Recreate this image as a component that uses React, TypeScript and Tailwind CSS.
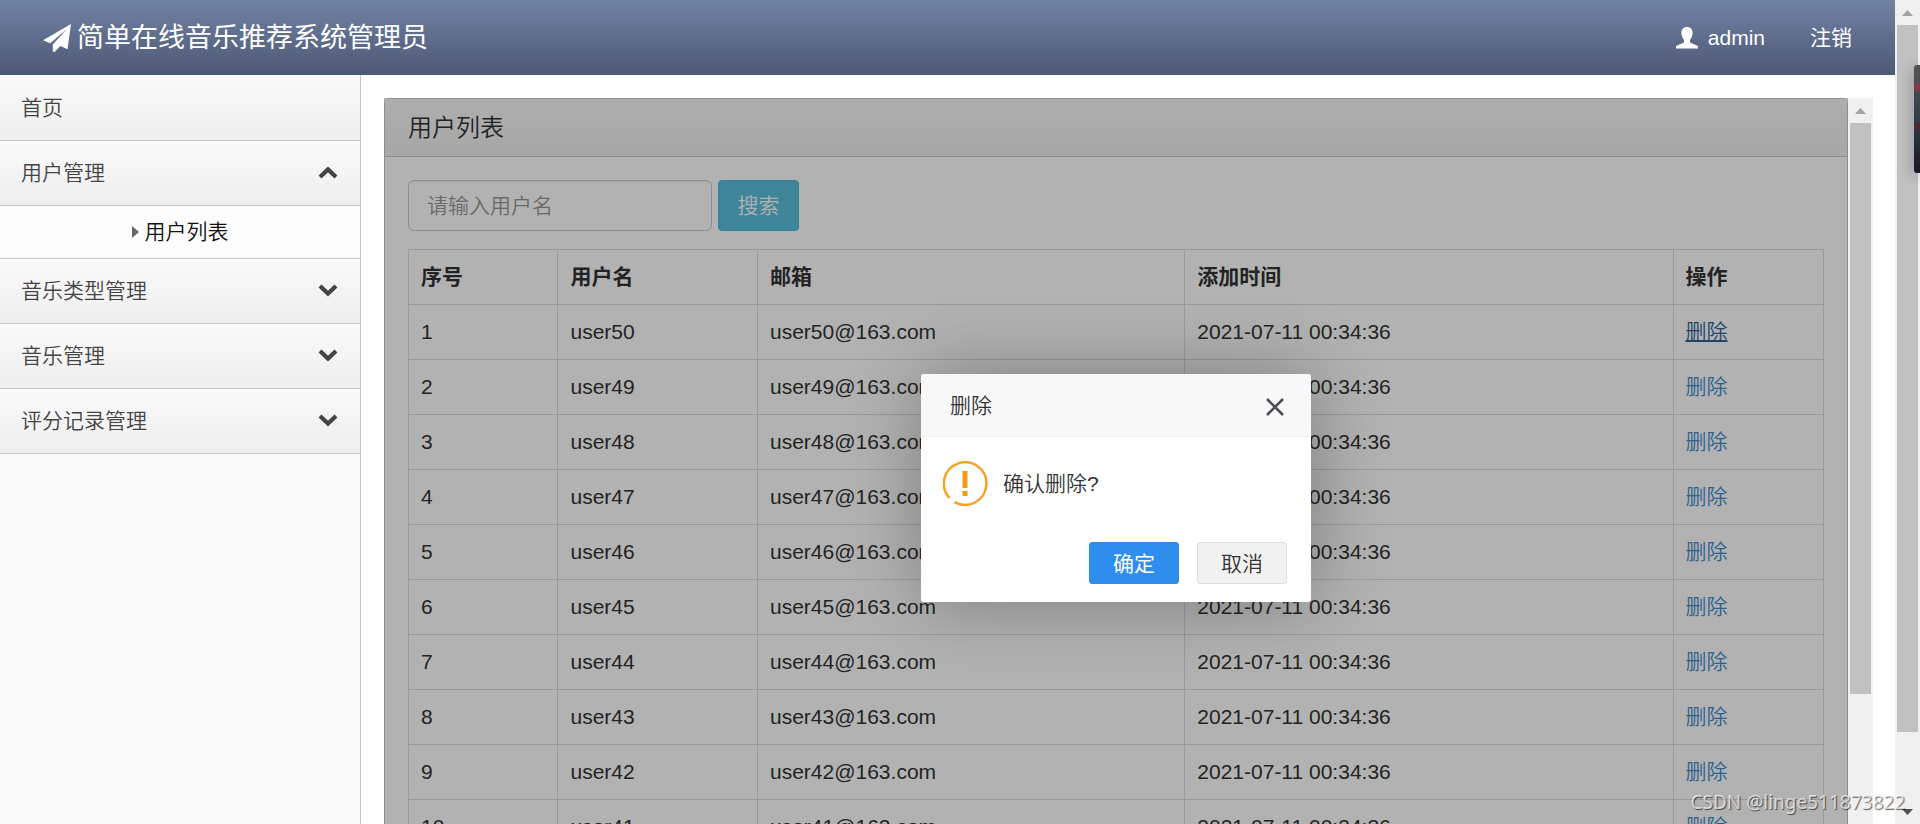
import React from "react";

const menuGroups = ["音乐类型管理", "音乐管理", "评分记录管理"];

const users = Array.from({ length: 12 }, (_, i) => ({
  no: i + 1,
  name: `user${50 - i}`,
  email: `user${50 - i}@163.com`,
  time: "2021-07-11 00:34:36",
}));

function PlaneIcon() {
  return (
    <svg viewBox="0 0 28 28" className="size-7 shrink-0 fill-current" aria-hidden="true">
      <path d="M28 0 24.500 25.200 17.500 22 11.500 28 9.800 27.400V20.400L24.300 4.600 7.300 19.300 0 16.200Z" />
    </svg>
  );
}

function UserIcon() {
  return (
    <svg viewBox="0 0 22 22" className="size-[22px] shrink-0 fill-current" aria-hidden="true">
      <path d="M11 0c3.800 0 5.600 2.300 5.600 5.800 0 2.900-1 5.400-2.600 7v1.900c0 .7.300 1.100 1 1.400l5.400 2.200c1 .5 1.600 1 1.600 2V21.500H0v-1.200c0-1 .6-1.500 1.600-2L7 16.100c.7-.3 1-.7 1-1.400v-1.900c-1.600-1.600-2.600-4.100-2.600-7C5.400 2.300 7.200 0 11 0Z" />
    </svg>
  );
}

function Chevron({ up = false }: { up?: boolean }) {
  return (
    <svg viewBox="0 0 20 13" className="mb-0.5 h-[13px] w-5 fill-none stroke-[#444]" strokeWidth="4.200" aria-hidden="true">
      {up ? <path d="M2 11 10 3.500 18 11" /> : <path d="M2 2 10 9.500 18 2" />}
    </svg>
  );
}

function MenuRow({ label, state }: { label: string; state?: "open" | "closed" }) {
  return (
    <button
      type="button"
      className="flex h-[65px] w-full items-center justify-between border-b border-[#c8c8c8] bg-linear-to-b from-[#fafafa] to-[#eeeeee] pr-[22px] pl-[21px] text-[#444]"
    >
      {label}
      {state && <Chevron up={state === "open"} />}
    </button>
  );
}

function ScrollBar({ thumb, end = false }: { thumb: string; end?: boolean }) {
  return (
    <div className="flex w-[25px] shrink-0 flex-col items-center bg-[#f0f0f0]" aria-hidden="true">
      <div className="flex h-[25px] shrink-0 items-center">
        <svg viewBox="0 0 11 6" className="h-1.5 w-[11px] fill-[#a3a3a3]">
          <path d="M0 6 5.500 0 11 6Z" />
        </svg>
      </div>
      <div className={`w-[21px] shrink-0 bg-[#c1c1c1] ${thumb}`} />
      {end && (
        <div className="mt-auto flex h-[25px] items-center">
          <svg viewBox="0 0 11 6" className="h-1.5 w-[11px] fill-[#505050]">
            <path d="M0 0 5.500 6 11 0Z" />
          </svg>
        </div>
      )}
    </div>
  );
}

function ConfirmDialog() {
  return (
    <div className="absolute inset-0 flex items-start justify-center bg-black/30 pt-[276px]">
      <div
        role="dialog"
        aria-labelledby="dialog-title"
        className="w-[390px] rounded-[3px] bg-white text-[#333] shadow-[1px_1px_75px_rgba(0,0,0,0.3)]"
      >
        <div className="flex h-[63px] items-center justify-between rounded-t-[3px] border-b border-[#eee] bg-[#f8f8f8] pt-0.5 pr-[26px] pl-[29px]">
          <h2 id="dialog-title">删除</h2>
          <button type="button" aria-label="关闭">
            <svg viewBox="0 0 20 20" className="mt-0.5 size-5 fill-none stroke-[#4c4c5a]" strokeWidth="2.600">
              <path d="M2 2 18 18M18 2 2 18" />
            </svg>
          </button>
        </div>
        <div className="flex items-center gap-[15px] px-[22px] pt-6">
          <svg viewBox="0 0 45 45" className="size-[45px] fill-none stroke-[#f7a11e]" aria-hidden="true">
            <path d="M6.500 37A21.300 21.300 0 1 1 11.500 41" strokeWidth="2.400" />
            <path d="M19.500 10h5V27h-5ZM19.500 30h5v5h-5Z" className="fill-[#f59b10] stroke-none" />
          </svg>
          <p>确认删除?</p>
        </div>
        <div className="flex justify-end gap-[18px] px-6 pt-9 pb-[18px]">
          <button type="button" className="h-[42px] w-[90px] rounded-[3px] border border-[#2e8ded] bg-[#2e8ded] pt-0.5 font-normal text-white">
            确定
          </button>
          <button type="button" className="h-[42px] w-[90px] rounded-[3px] border border-[#dedede] bg-[#f1f1f1] pt-0.5">
            取消
          </button>
        </div>
      </div>
    </div>
  );
}

export default function App() {
  return (
    <div className="relative flex h-screen overflow-hidden bg-white font-['Liberation_Sans','Noto_Sans_CJK_SC',sans-serif] text-[21px] leading-[30px] font-[350]">
      <div className="flex min-w-0 flex-1 flex-col">
        <header className="flex h-[75px] shrink-0 items-center justify-between bg-linear-to-b from-[#7282a5] to-[#4d5974] pr-[43px] pl-[43px] text-white">
          <h1 className="flex items-center gap-1.5 text-[27px] font-normal">
            <PlaneIcon />
            简单在线音乐推荐系统管理员
          </h1>
          <nav className="flex items-center gap-[45px] font-normal">
            <a href="#admin" className="flex items-center gap-2.5">
              <UserIcon />
              admin
            </a>
            <a href="#logout">注销</a>
          </nav>
        </header>
        <div className="flex min-h-0 flex-1">
          <aside className="w-[361px] shrink-0 border-r border-[#c8c8c8] bg-[#fafafa] pt-px">
            <MenuRow label="首页" />
            <MenuRow label="用户管理" state="open" />
            <a
              href="#users"
              className="flex h-[53px] items-center justify-center gap-1.5 border-b border-[#c8c8c8] bg-[#fcfcfc] text-[#111]"
            >
              <svg viewBox="0 0 7 12" className="h-3 w-[7px] fill-[#666]" aria-hidden="true">
                <path d="M0 0 7 6 0 12Z" />
              </svg>
              用户列表
            </a>
            {menuGroups.map((label) => (
              <MenuRow key={label} label={label} state="closed" />
            ))}
          </aside>
          <main className="flex min-w-0 flex-1 pt-[23px] pr-[22px] pl-[23px]">
            <div className="relative min-w-0 flex-1 overflow-hidden">
              <section className="rounded-t-[5px] border border-[#ccc] text-[#333]">
                <h2 className="border-b border-[#ccc] bg-linear-to-b from-[#fafafa] to-[#efefef] px-[23px] py-[14px] text-2xl leading-[29px]">
                  用户列表
                </h2>
                <div className="px-[23px] pt-[23px]">
                  <form className="flex gap-1.5">
                    <input
                      type="text"
                      aria-label="用户名"
                      placeholder="请输入用户名"
                      className="h-[51px] w-[304px] rounded-md border border-[#ccc] px-[18px] shadow-[inset_0_1px_1px_rgba(0,0,0,0.075)] placeholder:text-[#999]"
                    />
                    <button type="button" className="h-[51px] w-[81px] rounded-[4px] border border-[#46b8da] bg-[#5bc0de] text-white">
                      搜索
                    </button>
                  </form>
                  <table className="mt-[18px] w-full table-fixed border-collapse text-left">
                    <colgroup>
                      <col className="w-[149px]" />
                      <col className="w-[14.100%]" />
                      <col className="w-[30.200%]" />
                      <col className="w-[34.500%]" />
                      <col className="w-[150px]" />
                    </colgroup>
                    <thead>
                      <tr>
                        {["序号", "用户名", "邮箱", "添加时间", "操作"].map((h) => (
                          <th key={h} className="border border-[#ddd] p-3 font-bold">
                            {h}
                          </th>
                        ))}
                      </tr>
                    </thead>
                    <tbody>
                      {users.map((u) => (
                        <tr key={u.no}>
                          <td className="border border-[#ddd] p-3">{u.no}</td>
                          <td className="border border-[#ddd] p-3">{u.name}</td>
                          <td className="border border-[#ddd] p-3">{u.email}</td>
                          <td className="border border-[#ddd] p-3">{u.time}</td>
                          <td className="border border-[#ddd] p-3">
                            <a href="#delete" className={u.no === 1 ? "text-[#2a6496] underline decoration-2" : "text-[#428bca]"}>
                              删除
                            </a>
                          </td>
                        </tr>
                      ))}
                    </tbody>
                  </table>
                </div>
              </section>
              <ConfirmDialog />
            </div>
            <ScrollBar thumb="h-[571px]" />
          </main>
        </div>
      </div>
      <ScrollBar thumb="h-[707px]" end />
      <div
        className="absolute top-[65px] right-0 flex h-[108px] w-1.5 flex-col rounded-l-[3px] bg-linear-to-b from-[#555] via-[#343c48] to-[#171821] pt-[18px] shadow-[0_2px_14px_rgba(0,0,0,0.4)]"
        aria-hidden="true"
      >
        <div className="h-2 bg-[#7d3a48]" />
        <div className="mt-8 h-1.5 bg-[#4a2733]" />
      </div>
      <p className="absolute right-[15px] bottom-[7px] font-['Noto_Sans',sans-serif] text-[19px] leading-[30px] font-normal text-white/70 [text-shadow:1px_1px_1px_rgba(0,0,0,0.6)]">
        CSDN @linge511873822
      </p>
    </div>
  );
}
